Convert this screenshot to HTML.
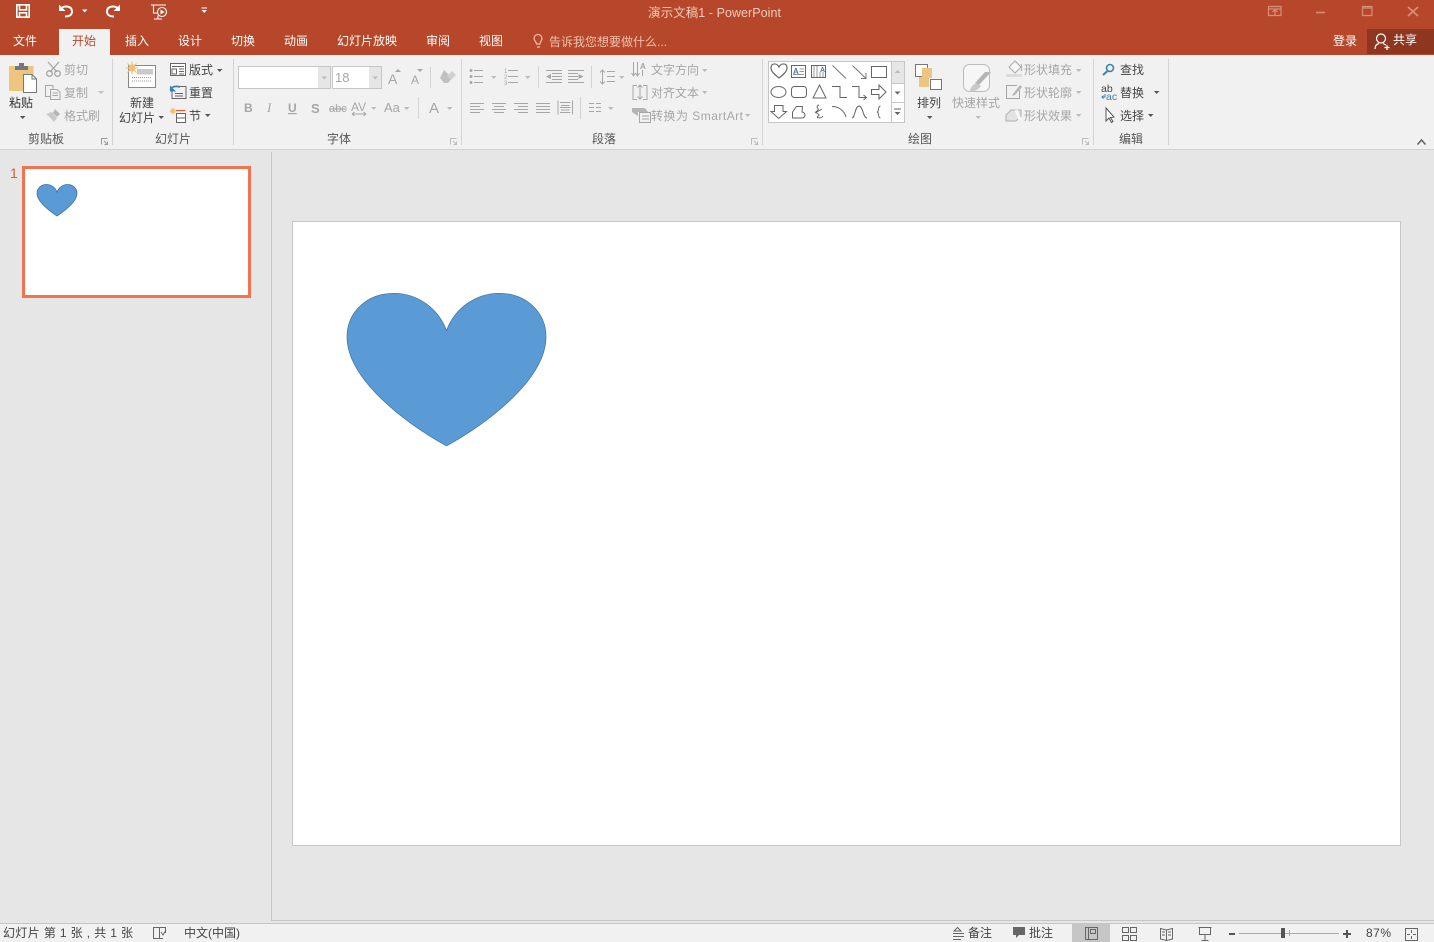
<!DOCTYPE html>
<html lang="zh"><head><meta charset="utf-8"><title>演示文稿1 - PowerPoint</title>
<style>
html,body{margin:0;padding:0;width:1434px;height:942px;overflow:hidden;background:#e6e6e6}
svg{display:block;position:absolute;left:0;top:0}
text{font-family:"Liberation Sans","Noto Sans CJK SC",sans-serif;font-size:12px;fill:#444}
.g{fill:#a6a6a6}.w{fill:#fff}.t{fill:#555}
.ig{fill:none;stroke:#a6a6a6;stroke-width:1}
.id{fill:none;stroke:#666;stroke-width:1}
.sh{fill:none;stroke:#666;stroke-width:1}
.cg{fill:#a6a6a6}.cd{fill:#555}
</style></head><body>
<svg width="1434" height="942" viewBox="0 0 1434 942" xmlns="http://www.w3.org/2000/svg">
<rect width="1434" height="942" fill="#e6e6e6"/>
<rect width="1434" height="55" fill="#b7472a"/>
<rect x="59" y="29" width="51" height="26" fill="#f1f1f1"/>
<rect x="1367" y="29" width="67" height="25" fill="#8f3620"/>
<rect y="55" width="1434" height="94" fill="#f1f1f1"/>
<rect y="149" width="1434" height="1" fill="#d2d2d2"/>

<!-- QAT -->
<g fill="none" stroke="#fff" stroke-width="1.600">
<path d="M16.800 4.800H29.200V17.200H16.800Z"/><path d="M19.500 5V9.800H26.500V5"/><path d="M19.500 17V12.800H26.500V17"/>
<path d="M61 8.500C64 5.500 72 5.500 72 11.500C72 15 69 16.500 65 16.500" stroke-width="2"/>
<path d="M118 8.500C115 5.500 107 5.500 107 11.500C107 15 110 16.500 114 16.500" stroke-width="2"/>
<path d="M151 5H166M153.500 5V13H158M158 15.500V19M154 19H162" stroke-width="1.100"/>
<circle cx="162" cy="12" r="4.500" stroke-width="1.100"/>
</g>
<path d="M59 4.500V11H65.500Z" fill="#fff"/><path d="M120 4.500V11H113.500Z" fill="#fff"/>
<path d="M160.500 9.500L164.500 12L160.500 14.500Z" fill="#fff"/>
<path d="M82 9.500H87.500L84.700 12.500Z" fill="#fff"/>
<path d="M201.500 7.500H207V8.500H201.500ZM201.500 10H207L204.200 13Z" fill="#fff"/>

<!-- title -->
<text x="648" y="17" style="fill:#f3cdbd;font-size:12.500px" textLength="133">演示文稿1 - PowerPoint</text>
<g fill="none" stroke="#d58e77" stroke-width="1.200">
<path d="M1268.500 6.500H1281V15.500H1268.500ZM1268.500 9H1281M1275 15V10M1272.500 12L1275 9.800L1277.500 12"/>
<path d="M1316 12.500H1325" stroke-width="1.600"/>
<path d="M1362.500 6.500H1372V15.500H1362.500ZM1362.500 8H1372"/>
<path d="M1408 7L1418 16M1418 7L1408 16" stroke-width="1.800"/>
</g>

<!-- tabs -->
<g>
<text class="w" x="13" y="45">文件</text>
<text x="72" y="45" style="fill:#b7472a">开始</text>
<text class="w" x="125" y="45">插入</text>
<text class="w" x="178" y="45">设计</text>
<text class="w" x="231" y="45">切换</text>
<text class="w" x="284" y="45">动画</text>
<text class="w" x="337" y="45">幻灯片放映</text>
<text class="w" x="426" y="45">审阅</text>
<text class="w" x="479" y="45">视图</text>
</g>
<g fill="none" stroke="#f0c0ad" stroke-width="1.200"><path d="M536.500 44C536 41 534 40.500 534 38.500A4 4 0 0 1 542 38.500C542 40.500 540.500 41 540 44ZM537 47H540"/></g>
<text x="549" y="46" style="fill:#f0c0ad">告诉我您想要做什么...</text>
<text class="w" x="1333" y="45">登录</text>
<text class="w" x="1393" y="44">共享</text>
<g fill="none" stroke="#fff" stroke-width="1.200"><circle cx="1381" cy="38.500" r="4.500"/><path d="M1375 49C1375 45.500 1377 44 1379 43.500M1383 43.500L1386 45M1387 45V50M1384.500 47.500H1389.500"/></g>

<!-- separators -->
<g fill="#d2d2d2">
<rect x="112" y="59" width="1" height="86"/><rect x="233" y="59" width="1" height="86"/><rect x="461" y="59" width="1" height="86"/><rect x="762" y="59" width="1" height="86"/><rect x="1093" y="59" width="1" height="86"/><rect x="1168" y="59" width="1" height="86"/>
<rect x="430" y="67" width="1" height="21"/><rect x="418" y="97" width="1" height="22"/><rect x="538" y="66" width="1" height="22"/><rect x="591" y="66" width="1" height="22"/><rect x="580" y="97" width="1" height="22"/>
</g>

<!-- group labels -->
<text class="t" x="28" y="143">剪贴板</text>
<text class="t" x="155" y="143">幻灯片</text>
<text class="t" x="327" y="143">字体</text>
<text class="t" x="592" y="143">段落</text>
<text class="t" x="908" y="143">绘图</text>
<text class="t" x="1119" y="143">编辑</text>
<g fill="none" stroke="#999" stroke-width="1">
<path d="M101.500 144.500V138.500H107.500M104 141L107.500 144.500M107.500 141.500V144.500H104.500"/>
<path d="M450.500 144.500V138.500H456.500M453 141L456.500 144.500M456.500 141.500V144.500H453.500" stroke="#bbb"/>
<path d="M751.500 144.500V138.500H757.500M754 141L757.500 144.500M757.500 141.500V144.500H754.500" stroke="#bbb"/>
<path d="M1082.500 144.500V138.500H1088.500M1085 141L1088.500 144.500M1088.500 141.500V144.500H1085.500" stroke="#bbb"/>
</g>
<path d="M1417.500 144.500L1421.500 140L1425.500 144.500" fill="none" stroke="#666" stroke-width="1.600"/>

<!-- clipboard -->
<rect x="9" y="66" width="24.500" height="25" fill="#ecc681"/>
<path d="M15 70V66H19V63H24V66H28V70Z" fill="#777"/>
<path d="M23.500 74.500H32L36.500 79V92.500H23.500Z" fill="#fff" stroke="#777"/>
<path d="M32 74.500V79H36.500" fill="none" stroke="#777"/>
<text x="9" y="107" style="font-size:12px;fill:#333">粘贴</text>
<path d="M20 116H25.500L22.700 119Z" class="cd"/>
<!-- scissors -->
<g class="ig" style="stroke-width:1.300"><path d="M48 62L57 72M59 62L50 72"/><circle cx="49.500" cy="73.500" r="2.800"/><circle cx="57.500" cy="73.500" r="2.800"/></g>
<text class="g" x="64" y="74">剪切</text>
<g class="ig"><path d="M45.500 85.500H53V96.500H45.500Z"/><path d="M50.500 89.500H57L60 92V99.500H50.500Z" fill="#f1f1f1"/><path d="M52.500 93H58M52.500 95.500H58"/></g>
<text class="g" x="64" y="97">复制</text>
<path d="M98 91H104L101 94Z" fill="#c0c0c0"/>
<g fill="#b5b5b5"><path d="M55 109L60 114L57 117L53 113Z"/><path d="M46 114L52 112L57 118L54 122C51 119 49 116 46 114Z" fill="#c9c9c9"/></g>
<text class="g" x="64" y="120">格式刷</text>

<!-- slides group -->
<rect x="128.500" y="65.500" width="27" height="22" fill="#fff" stroke="#888"/>
<rect x="137" y="69" width="16" height="5.500" fill="#c9c9c9"/>
<path d="M132 77.500H152M132 81H152" stroke="#999" stroke-dasharray="1 1" fill="none"/>
<circle cx="132" cy="68" r="3.500" fill="#f1bf72"/>
<path d="M132 61.500V74.500M125.500 68H138.500M127.500 63.500L136.500 72.500M136.500 63.500L127.500 72.500" stroke="#f1bf72" stroke-width="1.100"/>
<text x="130" y="107">新建</text>
<text x="119" y="122">幻灯片</text>
<path d="M158.500 116H164L161.200 119Z" class="cd"/>

<g fill="none" stroke="#666"><rect x="170.500" y="63.500" width="15" height="12" fill="#fff"/><path d="M172 66.500H184M172 69V74H176.500V69ZM179 69H184M179 71.500H184M179 74H184"/></g>
<text x="189" y="74">版式</text><path d="M217 69H222.500L219.700 72Z" class="cd"/>
<g fill="none" stroke="#666"><path d="M174 86.500H186V98.500H172V91"/><path d="M175 93.500H183M175 96H183"/></g>
<path d="M170.500 90C171 87 175 85.500 180 87" stroke="#3f7fb8" stroke-width="1.800" fill="none"/><path d="M170 85.500V91.500H176Z" fill="#3f7fb8"/>
<text x="189" y="97">重置</text>
<circle cx="173" cy="111" r="2" fill="#f1bf72"/><path d="M173 107.500V114.500M169.500 111H176.500M170.700 108.700L175.300 113.300M175.300 108.700L170.700 113.300" stroke="#f1bf72"/>
<path d="M176 110.500H185.500" stroke="#d9603b" stroke-width="1.200" fill="none"/>
<path d="M176.500 113.500H185.500V122.500H176.500ZM176.500 118H185.500" fill="#fff" stroke="#666"/>
<text x="189" y="120">节</text><path d="M205 114H210.500L207.700 117Z" class="cd"/>

<!-- font group -->
<rect x="238.500" y="66.500" width="92" height="22" fill="#fff" stroke="#c6c6c6"/>
<rect x="318" y="67" width="12" height="21" fill="#e6e6e6"/>
<path d="M321.500 76.500H327L324.200 79.500Z" fill="#bbb"/>
<rect x="332.500" y="66.500" width="49" height="22" fill="#fff" stroke="#c6c6c6"/>
<rect x="369" y="67" width="12" height="21" fill="#e6e6e6"/>
<path d="M372.500 76.500H378L375.200 79.500Z" fill="#bbb"/>
<text class="g" x="335" y="82" style="font-size:13px">18</text>
<text class="g" x="388" y="84" style="font-size:14px">A</text><path d="M395 72L398 69L401 72Z" class="cg"/>
<text class="g" x="411" y="84" style="font-size:12px">A</text><path d="M417 69H423L420 72Z" class="cg"/>
<path d="M444 70L452 78L448 83H444L440 78Z" fill="#c0c0c0"/><path d="M447 76L452 71L456 75L451 80Z" fill="#d0d0d0"/>
<text class="g" x="244" y="112" style="font-weight:bold">B</text>
<text class="g" x="267" y="112" style="font-family:'Liberation Serif',serif;font-style:italic;font-size:13px">I</text>
<text class="g" x="288" y="112" style="font-weight:bold;text-decoration:underline">U</text>
<text class="g" x="311" y="113" style="font-weight:bold;font-size:13px">S</text>
<text class="g" x="329" y="112" style="font-size:11px;text-decoration:line-through">abc</text>
<text class="g" x="351" y="111" style="font-size:12px">AV</text>
<path d="M352 114H366M352 114L354.500 112M352 114L354.500 116M366 114L363.500 112M366 114L363.500 116" class="ig"/>
<path d="M371 107H376.500L373.700 110Z" fill="#bbb"/>
<text class="g" x="384" y="112" style="font-size:13px">Aa</text>
<path d="M404 107H409.500L406.700 110Z" fill="#bbb"/>
<text class="g" x="429" y="113" style="font-size:15px">A</text>
<path d="M447 107H452.500L449.700 110Z" fill="#bbb"/>

<!-- paragraph group -->
<g class="ig">
<path d="M474 70.500H483M474 76.500H483M474 82.500H483"/>
<path d="M508 70.500H518M508 76.500H518M508 82.500H518"/>
<path d="M546 70.500H562M552 73.500H562M552 76.500H562M552 79.500H562M546 82.500H562"/>
<path d="M568 70.500H584M568 73.500H578M568 76.500H578M568 79.500H578M568 82.500H584"/>
<path d="M607 71.500H615M607 76.500H615M607 81.500H615M602.500 70V84M600 72.500L602.500 70L605 72.500M600 81.500L602.500 84L605 81.500"/>
<path d="M470 103.500H484M470 106.500H480M470 109.500H484M470 112.500H480"/>
<path d="M492 103.500H506M494 106.500H504M492 109.500H506M494 112.500H504"/>
<path d="M514 103.500H528M518 106.500H528M514 109.500H528M518 112.500H528"/>
<path d="M536 103.500H550M536 106.500H550M536 109.500H550M536 112.500H550"/>
<path d="M558 100.500V114.500M572.500 100.500V114.500M560 102.500H570.500M560 112.500H570.500M560 107.500H570.500M561 105.500H569.500M561 110H569.500"/>
<path d="M589 103.500H594M596 103.500H601M589 107.500H594M596 107.500H601M589 111.500H594M596 111.500H601"/>
</g>
<g fill="#a6a6a6"><circle cx="471" cy="70.500" r="1.500"/><circle cx="471" cy="76.500" r="1.500"/><circle cx="471" cy="82.500" r="1.500"/>
<path d="M546 76.500L551 74V79ZM583.500 76.500L578.500 74V79Z"/>
<path d="M491 76H496.500L493.700 79ZM525 76H530.500L527.700 79ZM619 76H624.500L621.700 79ZM608 107H613.500L610.700 110Z" fill="#bbb"/></g>
<text class="g" x="504" y="73" style="font-size:6px">1</text><text class="g" x="504" y="79" style="font-size:6px">2</text><text class="g" x="504" y="85" style="font-size:6px">3</text>

<g class="ig">
<path d="M633.500 62V76M637.500 62V76M642.500 70V76M631.500 73L633.500 76L635.500 73M635.500 73L637.500 76L639.500 73"/>
<path d="M633 85.500H637M643 85.500H647M633 85.500V99.500H637M647 85.500V99.500H643M640 85V99M637.500 87.500L640 85L642.500 87.500M637.500 96.500L640 99L642.500 96.500"/>
<path d="M639.500 112.500H650.500V122.500H639.500ZM642 116H649M642 119H649"/>
</g>
<path d="M632 108H645L648 112H638V116L632 112Z" fill="#b5b5b5"/>
<text class="g" x="640" y="69" style="font-size:8px;font-weight:bold">A</text>
<text class="g" x="651" y="74">文字方向</text><path d="M702 69H707.500L704.700 72Z" fill="#bbb"/>
<text class="g" x="651" y="97">对齐文本</text><path d="M702 91H707.500L704.700 94Z" fill="#bbb"/>
<text class="g" x="651" y="120" textLength="92">转换为 SmartArt</text><path d="M745 114H750.500L747.700 117Z" fill="#bbb"/>

<!-- shapes gallery -->
<rect x="768.500" y="61.500" width="136" height="61" fill="#fff" stroke="#c6c6c6"/>
<rect x="891" y="62" width="13" height="21" fill="#e6e6e6"/>
<path d="M891.500 62V122M891 83.500H904M891 102.500H904" stroke="#c6c6c6" fill="none"/>
<path d="M894.500 73L897.500 70L900.500 73Z" fill="#bbb"/>
<path d="M894.500 91.500H900.500L897.500 94.500Z" fill="#666"/>
<path d="M894 108.500H901V109.500H894ZM894.500 112H900.500L897.500 115Z" fill="#666"/>
<g class="sh">
<path d="M779 78C776 75.500 771 72 771 68C771 62.500 777 63 779 67C781 63 787 62.500 787 68C787 72 782 75.500 779 78Z" stroke-width="1.200"/>
<rect x="791.500" y="65.500" width="14" height="12"/><path d="M799.500 69H804M799.500 71.500H804M793 74.500H804" stroke="#999"/>
<rect x="811.500" y="65.500" width="14" height="12"/><path d="M814 66V77M817 66V77M820 72V77M823 72V77" stroke="#999"/>
<path d="M832.500 65.500L846 78.500" stroke="#777"/>
<path d="M852.500 65.500L866 78.500M866 73V78.500H861" stroke="#777"/>
<rect x="871.500" y="66.500" width="15" height="11"/>
<ellipse cx="778.500" cy="92" rx="7.500" ry="5.500"/>
<rect x="791.500" y="86.500" width="15" height="11" rx="3"/>
<path d="M819.500 85L826 98H813Z"/>
<path d="M832 86.500H840V97.500H847"/>
<path d="M852 86.500H859V97.500H866M863.500 95L866.500 97.500L863.500 100"/>
<path d="M871.500 89.500H879V85L886 92L879 99V94.500H871.500Z"/>
<path d="M774.500 105.500H783V111.500H786.500L778.700 118.500L771 111.500H774.500Z"/>
<path d="M792.500 112L796.500 106.500H802.500L802 112C806 113 806 117.500 802 118H792.500Z"/>
<path d="M819 105C814 107 821 109 817 111C813 113 822 114 818 116C815 118 822 119 823 116M815 113L822 109" stroke-width="1"/>
<path d="M832 106.500C838 106.500 844 110 846 117"/>
<path d="M852 118C855 118 855 106 859 106C863 106 863 118 867 118"/>
<path d="M880.500 106C877.500 106 879.500 111.500 877 112C879.500 112.500 877.500 118 880.500 118"/>
</g>
<text x="793" y="74" style="font-size:8px;font-weight:bold;fill:#3f7fb8">A</text>
<text x="820" y="72" style="font-size:7px;font-weight:bold;fill:#3f7fb8">A</text>

<!-- arrange -->
<rect x="915.500" y="64.500" width="12" height="12" fill="#fff" stroke="#777"/>
<rect x="922" y="68" width="10" height="10" fill="#ecc681"/>
<rect x="919" y="77" width="10" height="10" fill="#ecc681"/>
<rect x="930.500" y="79.500" width="11" height="10" fill="#fff" stroke="#777"/>
<text x="917" y="107">排列</text>
<path d="M927 116H932.500L929.700 119Z" class="cd"/>
<!-- quick styles -->
<rect x="963.500" y="64.500" width="26" height="27" rx="6" fill="#f6f6f6" stroke="#bbb"/>
<path d="M991 72L979 85L975 83L985 72Z" fill="#b5b5b5"/><path d="M981 86C977 91 973 92 969 92L972 86L976 83Z" fill="#c9c9c9"/>
<text class="g" x="952" y="107">快速样式</text>
<path d="M975.500 116H981L978.200 119Z" fill="#bbb"/>
<!-- shape props -->
<rect x="1006" y="74" width="16" height="3" fill="#dcdcdc"/>
<path d="M1009 67L1015 61L1021 67L1015 73Z" fill="#f8f8f8" stroke="#aaa"/><path d="M1021 64C1022 66 1022 69 1021 71" stroke="#aaa" fill="none"/>
<text class="g" x="1024" y="74">形状填充</text><path d="M1076 69H1081.500L1078.700 72Z" fill="#bbb"/>
<path d="M1017 85.500H1006.500V98.500H1019.500V90" class="ig"/><path d="M1013 94L1020 85L1022 87L1015 95L1012 96Z" fill="#b5b5b5"/>
<text class="g" x="1024" y="97">形状轮廓</text><path d="M1076 91H1081.500L1078.700 94Z" fill="#bbb"/>
<path d="M1006 115L1011 110H1021V116L1016 121H1006Z" fill="#e2e2e2" stroke="#b0b0b0"/><path d="M1016 110L1020 120" stroke="#f8f8f8" stroke-width="3"/>
<text class="g" x="1024" y="120">形状效果</text><path d="M1076 114H1081.500L1078.700 117Z" fill="#bbb"/>

<!-- editing -->
<circle cx="1110" cy="68" r="3.500" fill="none" stroke="#3f7fb8" stroke-width="1.600"/>
<path d="M1107.500 71L1103 75" stroke="#3f7fb8" stroke-width="2"/>
<text x="1120" y="74">查找</text>
<text x="1101" y="92" style="font-size:10.500px;fill:#444">ab</text>
<text x="1106" y="100" style="font-size:10.500px;fill:#3f7fb8">ac</text>
<path d="M1105 94V97H1102M1103.500 95.500L1102 97L1103.500 98.500" fill="none" stroke="#3f7fb8"/>
<text x="1120" y="97">替换</text>
<path d="M1154 91H1159.500L1156.700 94Z" class="cd"/>
<path d="M1106 108V121L1109 118L1111.500 122.500L1113 121.500L1110.500 117.500L1114 117Z" fill="#fff" stroke="#555"/>
<text x="1120" y="120">选择</text>
<path d="M1148 114H1153.500L1150.700 117Z" class="cd"/>

<!-- panes -->
<rect x="271" y="152" width="1" height="769" fill="#c6c6c6"/>
<rect x="272" y="920" width="1162" height="1" fill="#c6c6c6"/>
<rect x="292.500" y="221.500" width="1108" height="624" fill="#fff" stroke="#c6c6c6"/>
<path d="M446.500 330.500C438 308 417 293.300 394 293.300C367 293.300 347 312 347 337C347 377 400 420 446.500 446C493 420 546 377 546 337C546 312 526 293.300 499 293.300C476 293.300 455 308 446.500 330.500Z" fill="#5b9bd5" stroke="#41719c" stroke-width="0.700"/>
<rect x="23.500" y="167.500" width="226" height="129" fill="#fff" stroke="#f4734f" stroke-width="3"/>
<path d="M57 192C55.300 187.500 51 184.500 46.500 184.500C41 184.500 37 188.300 37 193.300C37 201.300 47.700 209.800 57 216C66.300 209.800 77 201.300 77 193.300C77 188.300 73 184.500 67.500 184.500C63 184.500 58.700 187.500 57 192Z" fill="#5b9bd5" stroke="#41719c" stroke-width="0.800"/>
<text x="10" y="178" style="font-size:14px;fill:#d2603f">1</text>

<!-- status -->
<rect y="923" width="1434" height="1" fill="#c6c6c6"/>
<rect y="924" width="1434" height="18" fill="#f1f1f1"/>
<rect x="1072" y="924" width="38" height="18" fill="#c6c6c6"/>
<text x="3" y="937" textLength="130">幻灯片 第 1 张 , 共 1 张</text>
<text x="184" y="937">中文(中国)</text>
<g class="id">
<path d="M153.500 927.500H159.500V938.500H153.500ZM159.500 927.500H165.500V933M159.500 938.500H163M161 932L163 935L166 930"/>
<path d="M957.500 927.500L954 931H961ZM953 933.500H964M953 936.500H964M953 939.500H961"/>
<path d="M1085.500 927.500H1097.500V939.500H1085.500ZM1088.500 927.500V939.500M1090.500 929.500H1095.500V933.500H1090.500Z"/>
<path d="M1122.500 927.500H1128.500V932.500H1122.500ZM1130.500 927.500H1136.500V932.500H1130.500ZM1122.500 935.500H1128.500V940.500H1122.500ZM1130.500 935.500H1136.500V940.500H1130.500Z"/>
<path d="M1160.500 928.500L1166.500 930L1172.500 928.500V939L1166.500 940.500L1160.500 939ZM1166.500 930V940.500M1162 932H1165M1162 935H1165M1168 932H1171M1168 935H1171"/>
<path d="M1198.500 927.500H1211.500M1199.500 927.500V934.500H1210.500V927.500M1205 934.500V940M1201.500 940.500H1208.500"/>
<path d="M1405.500 928.500H1417.500V940.500H1405.500ZM1411.500 930V933M1411.500 936V939M1407 934.500H1410M1413 934.500H1416"/>
</g>
<text x="968" y="937">备注</text>
<path d="M1013 927H1025V935H1019L1016 938V935H1013Z" fill="#666"/>
<text x="1029" y="937">批注</text>
<rect x="1229" y="933" width="6" height="2" fill="#555"/>
<rect x="1239" y="933" width="100" height="1" fill="#aaa"/>
<rect x="1289" y="930" width="1" height="6" fill="#aaa"/>
<rect x="1281" y="928" width="4" height="10" fill="#555"/>
<path d="M1343 933H1351V935H1343ZM1346 930H1348V938H1346Z" fill="#555"/>
<text x="1366" y="937" textLength="25">87%</text>
</svg>
</body></html>
